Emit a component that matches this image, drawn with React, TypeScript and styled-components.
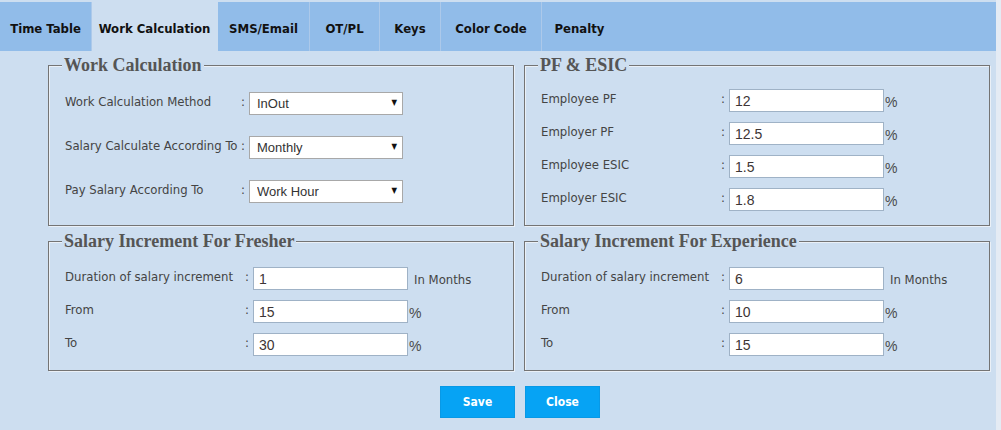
import styled, { createGlobalStyle } from 'styled-components';

const GlobalStyle = createGlobalStyle`
  html, body {
    margin: 0;
    padding: 0;
  }
  body {
    background: #e4ebf4;
    font-family: "DejaVu Sans Condensed", "DejaVu Sans", sans-serif;
  }
`;

const Page = styled.div`
  width: 996px;
  min-height: 430px;
  box-sizing: border-box;
  padding-top: 2px;
  background: #cddef0;
`;

const TabBar = styled.div`
  display: flex;
  height: 49px;
  background: #91bce9;
`;

const Tab = styled.div<{ $width: number; $active?: boolean; $last?: boolean }>`
  width: ${({ $width }) => $width}px;
  box-sizing: border-box;
  display: flex;
  align-items: center;
  justify-content: center;
  padding-top: 3px;
  border-right: 1px solid
    ${({ $active, $last }) => ($active ? '#cddef0' : $last ? 'transparent' : '#acc9ea')};
  background: ${({ $active }) => ($active ? '#cddef0' : 'transparent')};
  font-size: 13px;
  font-weight: bold;
  color: #111;
  cursor: pointer;
`;

const Content = styled.div`
  padding: 4px 0 0 48px;
  width: 942px;
`;

const Grid = styled.div`
  display: grid;
  grid-template-columns: 466px 466px;
  column-gap: 10px;
  row-gap: 5px;
`;

const Group = styled.fieldset`
  margin: 0;
  min-width: 0;
  padding: 0 12px 0 13px;
  border: 1px solid #747474;
  box-shadow: inset 1px 1px 0 #eaf0f7, 1px 1px 0 #eaf0f7;
`;

const Legend = styled.legend`
  padding: 0 2px;
  background: #cddef0;
  font-family: "Liberation Serif", serif;
  font-size: 18px;
  font-weight: bold;
  color: #555;
  line-height: 20px;
`;

const Fields = styled.div<{ $label: number; $gap: number; $top: number }>`
  display: grid;
  grid-template-columns: ${({ $label }) => $label}px 6px auto auto;
  justify-content: start;
  align-items: center;
  row-gap: ${({ $gap }) => $gap}px;
  padding: ${({ $top }) => $top}px 0 14px 3px;
`;

const Label = styled.span`
  font-size: 13px;
  color: #444;
  padding-bottom: 4px;
  white-space: nowrap;
`;

const Colon = styled.span`
  font-size: 13px;
  color: #444;
  padding-bottom: 4px;
  margin-left: -2px;
`;

const SelectWrap = styled.div`
  position: relative;
  width: 154px;
`;

const Select = styled.select`
  appearance: none;
  display: block;
  width: 154px;
  height: 23px;
  box-sizing: border-box;
  margin: 0;
  padding: 0 0 0 7px;
  border: 1px solid #a8a8a8;
  border-radius: 0;
  background: #fff;
  font-family: "Liberation Sans", Arial, sans-serif;
  font-size: 13px;
  color: #333;
  outline: none;
`;

const Arrow = styled.span`
  position: absolute;
  right: 6px;
  top: 6px;
  font-size: 8px;
  color: #111;
  pointer-events: none;
`;

const Input = styled.input`
  display: block;
  width: 155px;
  height: 23px;
  box-sizing: border-box;
  margin: 0;
  padding: 0 0 0 5px;
  border: 1px solid #9fb2c6;
  border-radius: 0;
  background: #fff;
  font-family: "Liberation Sans", Arial, sans-serif;
  font-size: 14px;
  color: #3d3535;
  outline: none;
`;

const Suffix = styled.span`
  font-size: 13px;
  color: #444;
  margin-left: 6px;
  padding-top: 2px;
  white-space: nowrap;
`;

const Percent = styled.span`
  font-family: "Liberation Sans", Arial, sans-serif;
  font-size: 14px;
  color: #4a4a4a;
  margin-left: 1px;
  padding-top: 2px;
`;

const Actions = styled.div`
  display: flex;
  justify-content: center;
  gap: 10px;
  padding: 15px 0 0 2px;
`;

const Button = styled.button`
  width: 75px;
  height: 32px;
  border: 1px solid #0899e6;
  background: #06a3f4;
  color: #fff;
  font-family: inherit;
  font-size: 12px;
  font-weight: bold;
  cursor: pointer;
`;

const tabs = [
  { name: 'Time Table', width: 92 },
  { name: 'Work Calculation', width: 126, active: true },
  { name: 'SMS/Email', width: 92 },
  { name: 'OT/PL', width: 70 },
  { name: 'Keys', width: 61 },
  { name: 'Color Code', width: 101 },
  { name: 'Penalty', width: 76, last: true },
];

const pfRows = [
  { label: 'Employee PF', value: '12' },
  { label: 'Employer PF', value: '12.5' },
  { label: 'Employee ESIC', value: '1.5' },
  { label: 'Employer ESIC', value: '1.8' },
];

type SelectRowProps = { label: string; value: string };

const SelectRow = ({ label, value }: SelectRowProps) => (
  <>
    <Label>{label}</Label>
    <Colon>:</Colon>
    <SelectWrap>
      <Select defaultValue={value}>
        <option>{value}</option>
      </Select>
      <Arrow>▼</Arrow>
    </SelectWrap>
    <span />
  </>
);

type InputRowProps = { label: string; value: string; months?: boolean };

const InputRow = ({ label, value, months }: InputRowProps) => (
  <>
    <Label>{label}</Label>
    <Colon>:</Colon>
    <Input defaultValue={value} />
    {months ? <Suffix>In Months</Suffix> : <Percent>%</Percent>}
  </>
);

const Increment = ({ title, rows }: { title: string; rows: string[] }) => (
  <Group>
    <Legend>{title}</Legend>
    <Fields $label={182} $gap={10} $top={16}>
      <InputRow label="Duration of salary increment" value={rows[0]} months />
      <InputRow label="From" value={rows[1]} />
      <InputRow label="To" value={rows[2]} />
    </Fields>
  </Group>
);

export default function App() {
  return (
    <Page>
      <GlobalStyle />
      <TabBar>
        {tabs.map((t) => (
          <Tab key={t.name} $width={t.width} $active={t.active} $last={t.last}>
            {t.name}
          </Tab>
        ))}
      </TabBar>
      <Content>
        <Grid>
          <Group>
            <Legend>Work Calculation</Legend>
            <Fields $label={178} $gap={21} $top={17}>
              <SelectRow label="Work Calculation Method" value="InOut" />
              <SelectRow label="Salary Calculate According To" value="Monthly" />
              <SelectRow label="Pay Salary According To" value="Work Hour" />
            </Fields>
          </Group>
          <Group>
            <Legend>PF &amp; ESIC</Legend>
            <Fields $label={182} $gap={10} $top={14}>
              {pfRows.map((r) => (
                <InputRow key={r.label} label={r.label} value={r.value} />
              ))}
            </Fields>
          </Group>
          <Increment title="Salary Increment For Fresher" rows={['1', '15', '30']} />
          <Increment title="Salary Increment For Experience" rows={['6', '10', '15']} />
        </Grid>
        <Actions>
          <Button>Save</Button>
          <Button>Close</Button>
        </Actions>
      </Content>
    </Page>
  );
}
